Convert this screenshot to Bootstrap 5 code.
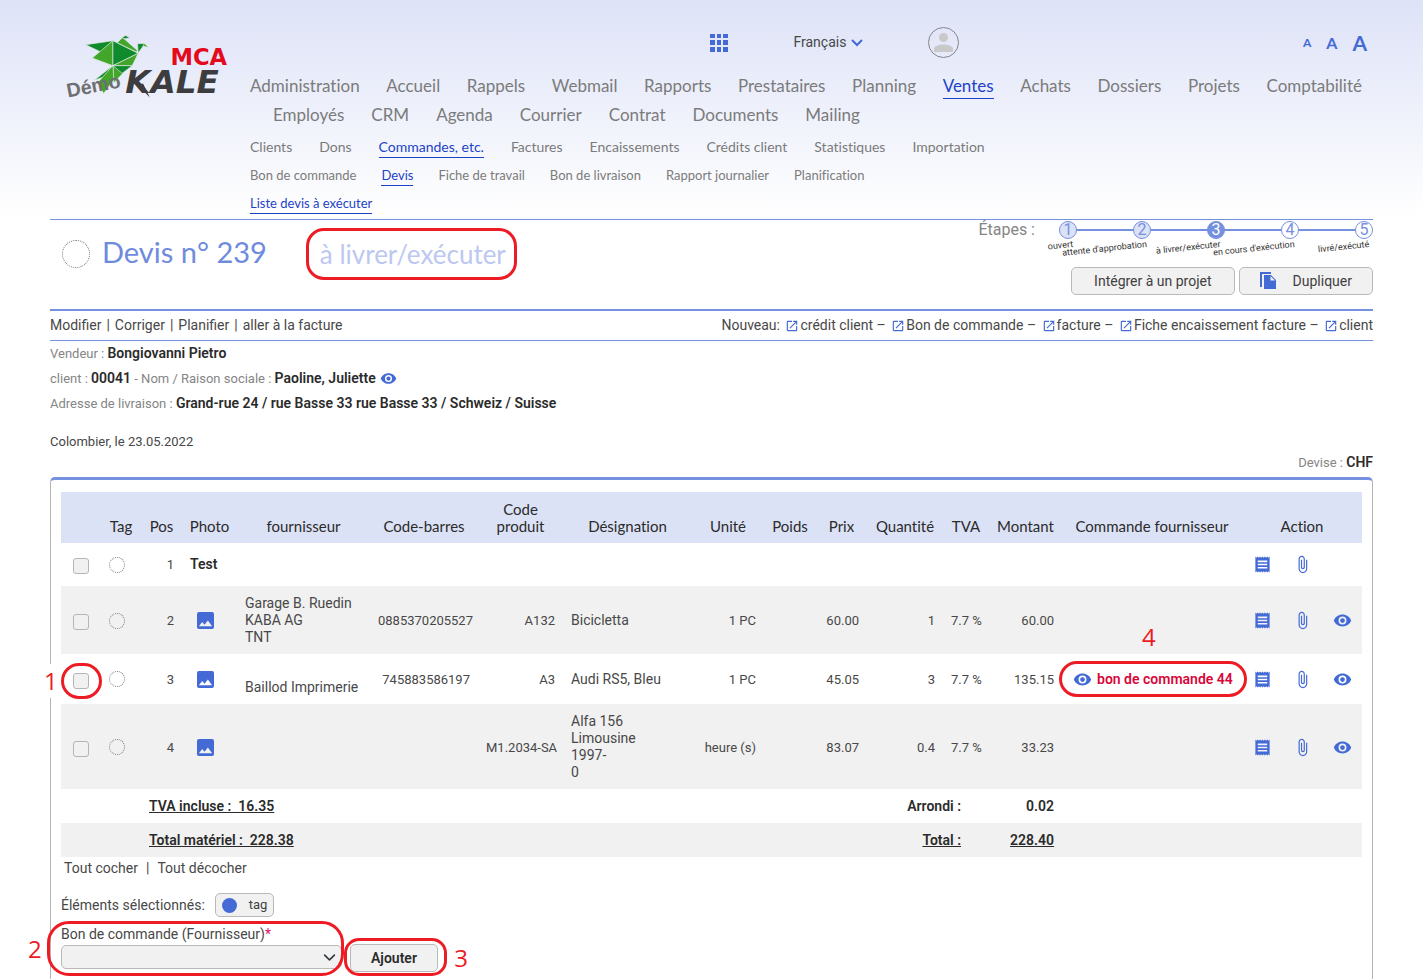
<!DOCTYPE html>
<html lang="fr">
<head>
<meta charset="utf-8">
<meta name="viewport" content="width=device-width, initial-scale=1">
<title>Devis n° 239</title>
<link href="https://cdn.jsdelivr.net/npm/bootstrap@5.3.0/dist/css/bootstrap.min.css" rel="stylesheet">
<style>
:root{--blue:#446ad6;--line:#7690e0;--soft:#dce2f6;--field:#f1f1f1;--red:#ed1c24}
body{font:14px/17px Roboto,sans-serif;color:#484848;background:linear-gradient(#dde2f7,#fff 216px) no-repeat #fff}
a{color:inherit;text-decoration:none}
svg{display:block;flex:none}
.page-wrap{padding:0 50px}
.title-font{font-family:Lato,sans-serif;font-variant-ligatures:none}
.site-logo{width:200px;padding:33px 0 0 10px}
.tools{display:grid;grid-template-columns:41% auto 1fr;height:31px;margin:27px 0 15px}
.lang{width:70px;margin:0 65px;font-size:14px;line-height:17px;color:#484848}
.avatar{width:31px;height:31px;border:1px solid #85858d}
.zoomers{color:var(--blue);gap:15px;padding-right:6px}
.zoomers button{background:none;border:0;padding:0;color:inherit;font-weight:700}
.zoomers .s{font-size:12px}
.zoomers .m{font-size:16px}
.zoomers .l{font-size:21px}
.menu-row{color:#7b7b7b;white-space:nowrap}
.menu-row a{border-bottom:1px solid transparent}
.menu-row a.active{color:#1c42c8;border-color:#1c42c8}
.m1{font-size:17px;line-height:25px}
.m2{font-size:14px;line-height:21px;gap:27px}
.m3{font-size:13px;line-height:19px;gap:25px}
.doc-head{border-top:1px solid var(--line);border-bottom:2px solid var(--line);height:92px}
.dot-ring{border:1px dotted #777;border-radius:50%;width:16px;height:16px;flex:none}
.dot-ring.big{width:28px;height:28px}
.doc-title{font-size:29px;line-height:36px;color:#6f8bdd;margin:0 0 4px 12px;font-weight:400}
.callout{border:3px solid var(--red);border-radius:18px}
.callout-over{position:absolute;pointer-events:none;z-index:2}
.callout-num{position:absolute;color:var(--red);font:24px/26px "Open Sans",sans-serif;z-index:3}
.state{font-size:26px;line-height:46px;color:#bcc8f0;padding:0 8px 0 11px;margin-left:39px;white-space:nowrap}
.steps-label{color:#858585;font-size:16px;line-height:18px;margin-right:24px}
.steps{list-style:none;margin:0;padding:0;gap:56px;background:linear-gradient(var(--line),var(--line)) 9px 8px/calc(100% - 18px) 2px no-repeat}
.steps li{position:relative;flex:none;width:18px;height:18px;border:1px solid var(--line);border-radius:50%;text-align:center;font-size:16px;line-height:16px;color:var(--line);background:#fff}
.steps li.done{background:var(--soft)}
.steps li.now{background:var(--line);color:#fff}
.steps small{position:absolute;right:4px;top:16px;font-size:9px;line-height:12px;color:#333;white-space:nowrap;transform:rotate(-6deg);transform-origin:100% 0}
.btn-grey{background:var(--field);border:1px solid #b9b9b9;border-radius:5px;color:#404040;padding:4px 20px;font-size:14px;line-height:18px}
.btn-grey:hover{background:#e6e6e6}
.btn-wide{padding-left:22px;padding-right:22px}
.bar{border-bottom:1px solid var(--line);height:30px}
.ext{display:inline-block;vertical-align:-3px;margin:0 1px 0 2px}
.info{color:#858585;font-size:13px;line-height:25px}
.info b,.strong{font-size:14px;font-weight:600;color:#2b2b2b}
.info b{line-height:1}
.panel{border:1px solid #b5b5b5;border-bottom:0;border-top:3px solid var(--line);border-radius:5px 5px 0 0;padding:12px 10px 0;margin-top:2px}
.lines{table-layout:fixed;width:100%;margin:0;color:inherit;--bs-table-color:#484848}
.lines>:not(caption)>*>*{padding:8px;border:0;vertical-align:middle;background:none;box-shadow:none}
.lines>tbody>.tall>*{padding-top:9px}
.lines>thead>tr>th{font-size:15px;font-weight:400;text-align:center;vertical-align:bottom;color:#2b2b2b;padding:8px 2px;white-space:nowrap}
.lines thead{background:var(--soft)}
.lines thead tr{height:51px}
.lines tbody tr{height:50px}
.lines tbody tr.low{height:43px}
.lines tbody tr.sum{height:34px}
.lines tbody tr:nth-child(even){background:#f1f1f1}
.lines .num{font-size:13px;text-align:right;white-space:nowrap}
.lines .act svg{margin:auto}
.lines>tbody>tr>.act{padding-left:0;padding-right:0}
.lines>tbody>tr>.pic{padding-left:15px}
.lines>tbody>tr>.sum-label{padding-right:28px;text-align:right}
.lines>tbody>tr>.strong{color:#2b2b2b}
.order-link{gap:5px;padding-left:3px;color:#d9073a;font-weight:600}
.form-check-input.tick{width:16px;height:16px;margin:3px 0 0 4px;background-color:var(--field);border:1px solid #b5b5b5;border-radius:3px;display:block}
.u{text-decoration:underline}
.supplier-select{width:281px;height:24px;border:1px solid #b9b9b9;border-radius:5px;background-color:var(--field);background-size:13px;background-position:right 5px center;padding:0 24px 0 8px;font-size:13px}
.tag-dot{width:15px;height:15px;border-radius:50%;background:var(--blue)}
.form-row-end{gap:8px;margin-top:9px}
</style>
</head>
<body>
<svg width="0" height="0" class="position-absolute" aria-hidden="true">
<defs>
<symbol id="eye" viewBox="0 0 24 24"><path fill="#446ad6" d="M12 4.500C7 4.500 2.730 7.610 1 12c1.730 4.390 6 7.500 11 7.500s9.270-3.110 11-7.500c-1.730-4.390-6-7.500-11-7.500zM12 17a5 5 0 1 1 0-10 5 5 0 0 1 0 10zm0-8a3 3 0 1 0 0 6 3 3 0 0 0 0-6z"/></symbol>
<symbol id="receipt" viewBox="0 0 24 24"><path fill="#446ad6" d="M18 17H6v-2h12v2zm0-4H6v-2h12v2zm0-4H6V7h12v2zM3 22l1.500-1.500L6 22l1.500-1.500L9 22l1.500-1.500L12 22l1.500-1.500L15 22l1.500-1.500L18 22l1.500-1.500L21 22V2l-1.500 1.500L18 2l-1.500 1.500L15 2l-1.500 1.500L12 2l-1.500 1.500L9 2 7.500 3.500 6 2 4.500 3.500 3 2v20z"/></symbol>
<symbol id="clip" viewBox="0 0 24 24"><path fill="#446ad6" d="M16.500 6v11.500c0 2.210-1.790 4-4 4s-4-1.790-4-4V5a2.500 2.500 0 0 1 5 0v10.500c0 .55-.45 1-1 1s-1-.45-1-1V6H10v9.500a2.500 2.500 0 0 0 5 0V5c0-2.210-1.790-4-4-4S7 2.790 7 5v12.500c0 3.040 2.460 5.500 5.500 5.500s5.500-2.460 5.500-5.500V6h-1.500z"/></symbol>
<symbol id="photo" viewBox="0 0 18 18"><path fill="#446ad6" d="M18 16V2a2 2 0 0 0-2-2H2a2 2 0 0 0-2 2v14a2 2 0 0 0 2 2h14a2 2 0 0 0 2-2zM5.500 10.500 8 13.510 11.500 9l4.500 6H2z"/></symbol>
<symbol id="open" viewBox="0 0 24 24"><path fill="#446ad6" d="M19 19H5V5h7V3H5a2 2 0 0 0-2 2v14c0 1.100.89 2 2 2h14a2 2 0 0 0 2-2v-7h-2v7zM14 3v2h3.590l-9.830 9.830 1.410 1.410L19 6.410V10h2V3h-7z"/></symbol>
</defs>
</svg>

<div class="page-wrap d-flex flex-column min-vh-100">
<header class="d-flex">
  <a href="#" class="site-logo flex-shrink-0" aria-label="Kale MCA Démo">
    <svg width="173" height="70" viewBox="60 40 520 210">
      <g stroke="#dfe8e6" stroke-width="2" stroke-linejoin="round">
        <path fill="#0f8a2c" d="M137 75 219 63 183 97z"/>
        <path fill="#41a62a" d="M219 63 157 115 219 138z"/>
        <path fill="#0f8a2c" d="M219 63 219 138 295 101z"/>
        <path fill="#41a62a" d="M219 138 295 101 277 138z"/>
        <path fill="#41a62a" d="M232 69 248 53 292 92 290 97z"/>
        <path fill="#0f8a2c" d="M246 54 257 47 270 54 256 57z"/>
        <path fill="#0f8a2c" d="M295 100 293 72 315 71 308 82z"/>
        <path fill="#41a62a" d="M309 79 315 71 325 83z"/>
        <path fill="#0f8a2c" d="M219 138 277 138 221 181z"/>
        <path fill="#41a62a" d="M219 138 248 162 221 190z"/>
        <path fill="#0f8a2c" d="M219 138 163 182 210 165z"/>
        <path fill="#41a62a" d="M219 138 222 180 191 222 174 188z"/>
      </g>
      <path fill="#3d3d3f" d="M290 192 310 192 330 234z"/>
      <text x="392" y="137" font-family="DejaVu Sans" font-weight="700" font-size="68" fill="#e30b1c">MCA</text>
      <text x="256" y="221" font-family="DejaVu Sans" font-weight="700" font-style="italic" font-size="98" fill="#3d3d3f">KALE</text>
      <text x="84" y="234" font-family="Liberation Sans" font-weight="700" font-size="59" fill="#6f6f72" transform="rotate(-11 84 234)">Démo</text>
    </svg>
  </a>
  <div class="flex-grow-1">
    <div class="tools align-items-center">
      <span></span>
      <div class="d-flex align-items-center">
        <a href="#" aria-label="Applications"><svg width="18" height="18" viewBox="0 0 18 18" fill="#446ad6"><path d="M0 0h5v4H0zM7 0h4v4H7zM13 0h5v4h-5zM0 6h5v5H0zM7 6h4v5H7zM13 6h5v5h-5zM0 13h5v5H0zM7 13h4v5H7zM13 13h5v5h-5z"/></svg></a>
        <button class="lang btn p-0 border-0 d-flex align-items-center justify-content-between">Français <svg width="12" height="8" viewBox="0 0 12 8"><path d="m1 1 5 5 5-5" fill="none" stroke="#446ad6" stroke-width="2"/></svg></button>
        <a href="#" class="avatar rounded-circle d-flex align-items-center justify-content-center" aria-label="Compte"><svg width="19" height="19" viewBox="0 0 19 19" fill="#c9c9c9"><circle cx="9.500" cy="4.500" r="4.500"/><path d="M0 19v-3c0-3 5-4.500 9.500-4.500S19 13 19 16v3z"/></svg></a>
      </div>
      <div class="zoomers d-flex justify-content-end align-items-center">
        <button class="s title-font">A</button><button class="m title-font">A</button><button class="l title-font">A</button>
      </div>
    </div>
    <nav class="menu-row title-font m1 d-flex justify-content-between" style="padding-right:11px">
      <a href="#">Administration</a><a href="#">Accueil</a><a href="#">Rappels</a><a href="#">Webmail</a><a href="#">Rapports</a><a href="#">Prestataires</a><a href="#">Planning</a><a href="#" class="active">Ventes</a><a href="#">Achats</a><a href="#">Dossiers</a><a href="#">Projets</a><a href="#">Comptabilité</a>
    </nav>
    <nav class="menu-row title-font m1 d-flex" style="margin-top:3px;padding-left:23px;gap:27px">
      <a href="#">Employés</a><a href="#">CRM</a><a href="#">Agenda</a><a href="#">Courrier</a><a href="#">Contrat</a><a href="#">Documents</a><a href="#">Mailing</a>
    </nav>
    <nav class="menu-row title-font m2 d-flex mt-2">
      <a href="#">Clients</a><a href="#">Dons</a><a href="#" class="active">Commandes, etc.</a><a href="#">Factures</a><a href="#">Encaissements</a><a href="#">Crédits client</a><a href="#">Statistiques</a><a href="#">Importation</a>
    </nav>
    <nav class="menu-row title-font m3 d-flex mt-2">
      <a href="#">Bon de commande</a><a href="#" class="active">Devis</a><a href="#">Fiche de travail</a><a href="#">Bon de livraison</a><a href="#">Rapport journalier</a><a href="#">Planification</a>
    </nav>
    <nav class="menu-row title-font m3 d-flex" style="margin:8px 0 5px"><a href="#" class="active">Liste devis à exécuter</a></nav>
  </div>
</header>

<section class="doc-head d-flex justify-content-between align-items-start">
  <div class="d-flex align-items-center pt-2" style="padding-left:12px">
    <span class="dot-ring big"></span>
    <h1 class="doc-title title-font text-nowrap">Devis n° 239</h1>
    <div class="state title-font callout">à livrer/exécuter</div>
  </div>
  <div class="d-flex flex-column align-items-end">
    <div class="d-flex" style="padding-top:1px">
      <span class="steps-label">Étapes :</span>
      <ol class="steps d-flex">
        <li class="done">1<small>ouvert</small></li><li class="done">2<small>attente d'approbation</small></li><li class="now">3<small>à livrer/exécuter</small></li><li>4<small>en cours d'exécution</small></li><li>5<small>livré/exécuté</small></li>
      </ol>
    </div>
    <div class="d-flex gap-1" style="margin-top:28px">
      <button class="btn btn-grey btn-wide">Intégrer à un projet</button>
      <button class="btn btn-grey d-flex align-items-center" style="gap:16px"><svg width="17" height="18" viewBox="0 0 17 18" fill="#446ad6"><path d="M0 0h11v2H2v13H0zM4 3h7l5 5v9H4z"/><path d="M10.500 4v4.500H15z" fill="#f1f1f1"/></svg>Dupliquer</button>
    </div>
  </div>
</section>

<div class="bar d-flex justify-content-between align-items-center">
  <div class="d-flex" style="gap:5px"><a href="#">Modifier</a><span>|</span><a href="#">Corriger</a><span>|</span><a href="#">Planifier</a><span>|</span><a href="#">aller à la facture</a></div>
  <div>Nouveau:
    <a href="#"><svg class="ext" width="14" height="14"><use href="#open"/></svg>crédit client</a> –
    <a href="#"><svg class="ext" width="14" height="14"><use href="#open"/></svg>Bon de commande</a> –
    <a href="#"><svg class="ext" width="14" height="14"><use href="#open"/></svg>facture</a> –
    <a href="#"><svg class="ext" width="14" height="14"><use href="#open"/></svg>Fiche encaissement facture</a> –
    <a href="#"><svg class="ext" width="14" height="14"><use href="#open"/></svg>client</a></div>
</div>

<div class="info">
  <div>Vendeur : <b>Bongiovanni Pietro</b></div>
  <div class="d-flex align-items-center gap-1"><span>client : <b>00041</b> - Nom / Raison sociale : <b>Paoline, Juliette</b></span><a href="#" aria-label="Voir le client"><svg width="17" height="17"><use href="#eye"/></svg></a></div>
  <div>Adresse de livraison : <b>Grand-rue 24 / rue Basse 33 rue Basse 33 / Schweiz / Suisse</b></div>
</div>
<div style="margin-top:17px;font-size:13px">Colombier, le 23.05.2022</div>
<div class="info text-end">Devise : <b>CHF</b></div>

<main class="panel flex-grow-1 position-relative">
<table class="table lines">
  <colgroup><col style="width:40px"><col style="width:40px"><col style="width:41px"><col style="width:55px"><col style="width:133px"><col style="width:108px"><col style="width:85px"><col style="width:129px"><col style="width:72px"><col style="width:52px"><col style="width:51px"><col style="width:76px"><col style="width:46px"><col style="width:73px"><col style="width:180px"><col style="width:40px"><col style="width:40px"><col style="width:40px"></colgroup>
  <thead class="title-font"><tr>
    <th></th><th>Tag</th><th>Pos</th><th>Photo</th><th>fournisseur</th><th>Code-barres</th><th>Code<br>produit</th><th>Désignation</th><th>Unité</th><th>Poids</th><th>Prix</th><th>Quantité</th><th>TVA</th><th>Montant</th><th>Commande fournisseur</th><th colspan="3">Action</th>
  </tr></thead>
  <tbody>
  <tr class="low">
    <td><input type="checkbox" class="form-check-input tick" aria-label="Ligne 1"></td><td><div class="dot-ring"></div></td><td class="num">1</td><td colspan="12" class="strong">Test</td>
    <td class="act"><svg width="19" height="19"><use href="#receipt"/></svg></td><td class="act"><svg width="19" height="19"><use href="#clip"/></svg></td><td></td>
  </tr>
  <tr class="tall">
    <td><input type="checkbox" class="form-check-input tick" aria-label="Ligne 2"></td><td><div class="dot-ring"></div></td><td class="num">2</td><td class="pic"><svg width="17" height="17"><use href="#photo"/></svg></td>
    <td>Garage B. Ruedin<br>KABA AG<br>TNT</td><td class="num">0885370205527</td><td class="num">A132</td><td>Bicicletta</td><td class="num">1 PC</td><td></td><td class="num">60.00</td><td class="num">1</td><td class="num">7.7 %</td><td class="num">60.00</td><td></td>
    <td class="act"><svg width="19" height="19"><use href="#receipt"/></svg></td><td class="act"><svg width="19" height="19"><use href="#clip"/></svg></td><td class="act"><svg width="19" height="19"><use href="#eye"/></svg></td>
  </tr>
  <tr>
    <td><div class="position-relative"><input type="checkbox" class="form-check-input tick" aria-label="Ligne 3"><span class="callout callout-over" style="inset:-10px -9px -10px -8px"></span><span class="callout-num bg-white" style="left:-25px;top:-9px;line-height:34px">1</span></div></td><td><div class="dot-ring"></div></td><td class="num">3</td><td class="pic"><svg width="17" height="17"><use href="#photo"/></svg></td>
    <td><br>Baillod Imprimerie</td><td class="num">745883586197</td><td class="num">A3</td><td>Audi RS5, Bleu</td><td class="num">1 PC</td><td></td><td class="num">45.05</td><td class="num">3</td><td class="num">7.7 %</td><td class="num">135.15</td>
    <td><div class="position-relative"><a href="#" class="order-link d-flex align-items-center text-nowrap"><svg width="19" height="19"><use href="#eye"/></svg>bon de commande 44</a><span class="callout callout-over" style="inset:-9px -13px -8px -11px"></span><span class="callout-num" style="left:72px;top:-46px">4</span></div></td>
    <td class="act"><svg width="19" height="19"><use href="#receipt"/></svg></td><td class="act"><svg width="19" height="19"><use href="#clip"/></svg></td><td class="act"><svg width="19" height="19"><use href="#eye"/></svg></td>
  </tr>
  <tr class="tall">
    <td><input type="checkbox" class="form-check-input tick" aria-label="Ligne 4"></td><td><div class="dot-ring"></div></td><td class="num">4</td><td class="pic"><svg width="17" height="17"><use href="#photo"/></svg></td>
    <td></td><td></td><td class="num">M1.2034-SA</td><td>Alfa 156<br>Limousine<br>1997-<br>0</td><td class="num">heure (s)</td><td></td><td class="num">83.07</td><td class="num">0.4</td><td class="num">7.7 %</td><td class="num">33.23</td><td></td>
    <td class="act"><svg width="19" height="19"><use href="#receipt"/></svg></td><td class="act"><svg width="19" height="19"><use href="#clip"/></svg></td><td class="act"><svg width="19" height="19"><use href="#eye"/></svg></td>
  </tr>
  <tr class="sum"><td colspan="2"></td><td colspan="8" class="strong"><span class="u">TVA incluse :&nbsp; 16.35</span></td><td colspan="3" class="strong sum-label">Arrondi :</td><td class="strong text-end">0.02</td><td colspan="4"></td></tr>
  <tr class="sum"><td colspan="2"></td><td colspan="8" class="strong"><span class="u">Total matériel :&nbsp; 228.38</span></td><td colspan="3" class="strong sum-label"><span class="u">Total :</span></td><td class="strong text-end"><span class="u">228.40</span></td><td colspan="4"></td></tr>
  </tbody>
</table>
<div class="d-flex" style="gap:8px;padding:3px 0 0 3px"><a href="#">Tout cocher</a><span>|</span><a href="#">Tout décocher</a></div>
<div class="d-flex align-items-center" style="margin-top:16px;gap:10px">Éléments sélectionnés: <button class="btn btn-grey d-flex align-items-center" style="padding:2px 6px;gap:12px;font-size:13px"><span class="tag-dot"></span>tag</button></div>
<form class="d-flex align-items-end form-row-end">
  <div class="position-relative">
    <label for="supplier" class="d-block" style="margin-bottom:2px">Bon de commande (Fournisseur)<span style="color:#e0126b">*</span></label>
    <select id="supplier" class="form-select supplier-select" style="margin-bottom:3px"><option></option></select>
    <span class="callout callout-over" style="inset:-5px -2px -4px -14px;border-radius:22px"></span><span class="callout-num" style="left:-33px;bottom:10px">2</span>
  </div>
  <div class="position-relative"><button type="button" class="btn btn-grey strong">Ajouter</button><span class="callout callout-over" style="inset:-6px -9px -4px -6px;border-radius:15px"></span><span class="callout-num" style="right:-30px;bottom:1px">3</span></div>
</form>
</main>
</div>
<script src="https://cdn.jsdelivr.net/npm/bootstrap@5.3.0/dist/js/bootstrap.bundle.min.js"></script>
</body>
</html>
